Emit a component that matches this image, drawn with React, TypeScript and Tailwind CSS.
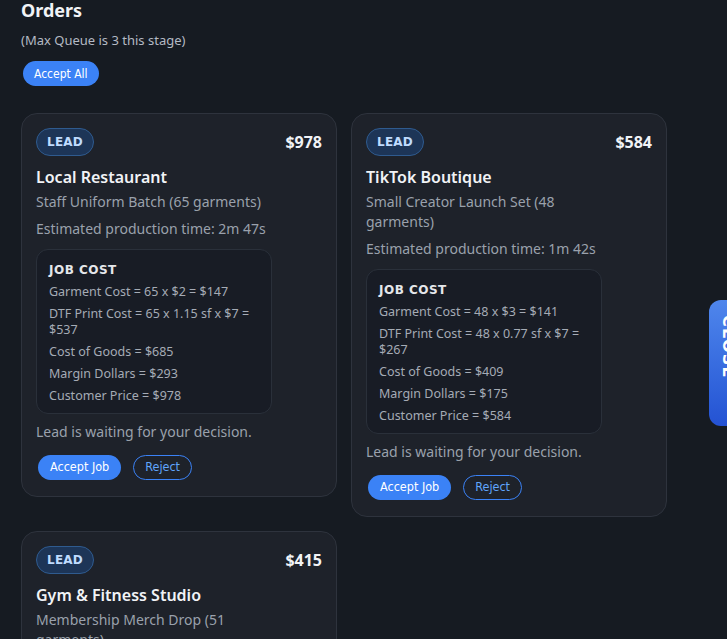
import React from 'react';

type Order = {
  id: number;
  customer: string;
  job: string;
  price: number;
  eta: string;
  costs: string[];
};

const ORDERS: Order[] = [
  {
    id: 1,
    customer: 'Local Restaurant',
    job: 'Staff Uniform Batch (65 garments)',
    price: 978,
    eta: '2m 47s',
    costs: [
      'Garment Cost = 65 x $2 = $147',
      'DTF Print Cost = 65 x 1.15 sf x $7 = $537',
      'Cost of Goods = $685',
      'Margin Dollars = $293',
      'Customer Price = $978',
    ],
  },
  {
    id: 2,
    customer: 'TikTok Boutique',
    job: 'Small Creator Launch Set (48 garments)',
    price: 584,
    eta: '1m 42s',
    costs: [
      'Garment Cost = 48 x $3 = $141',
      'DTF Print Cost = 48 x 0.77 sf x $7 = $267',
      'Cost of Goods = $409',
      'Margin Dollars = $175',
      'Customer Price = $584',
    ],
  },
  {
    id: 3,
    customer: 'Gym & Fitness Studio',
    job: 'Membership Merch Drop (51 garments)',
    price: 415,
    eta: '1m 58s',
    costs: [
      'Garment Cost = 51 x $2 = $102',
      'DTF Print Cost = 51 x 0.62 sf x $7 = $221',
      'Cost of Goods = $323',
      'Margin Dollars = $92',
      'Customer Price = $415',
    ],
  },
];

const OrderCard = ({ order }: { order: Order }) => (
  <div className="rounded-2xl border border-[#2e333d] bg-[#1e222a] px-[14px] pt-[14px] pb-[16px]">
    <div className="flex items-start justify-between">
      <span className="inline-flex h-[28px] items-center rounded-full border border-[#2f5b8f] bg-[#1d3557] px-[10px] font-['DejaVu_Sans',sans-serif] text-[12px] font-bold tracking-[0.02em] text-[#bfdbfe]">
        LEAD
      </span>
      <span className="pt-[2px] text-[16px] font-bold text-[#f1f3f6]">${order.price}</span>
    </div>
    <h3 className="mt-[10px] text-[16px] leading-[22px] font-semibold text-[#f1f3f6]">{order.customer}</h3>
    <p className="mt-[4px] w-[250px] text-[14px] leading-[20px] text-[#9aa1ac]">{order.job}</p>
    <p className="mt-[7px] text-[14px] leading-[20px] text-[#9aa1ac]">Estimated production time: {order.eta}</p>
    <div className="mt-[10px] w-[236px] rounded-xl border border-[#2a303a] bg-[#181c25] px-[12px] pt-[11px] pb-[9px]">
      <div className="font-['DejaVu_Sans',sans-serif] text-[12px] font-bold tracking-[0.04em] text-[#e5e7eb]">JOB COST</div>
      <div className="mt-[5px] flex flex-col gap-[6px]">
        {order.costs.map((line) => (
          <div key={line} className="text-[12.5px] leading-[16px] text-[#a5abb5]">
            {line}
          </div>
        ))}
      </div>
    </div>
    <p className="mt-[8px] text-[14px] leading-[20px] text-[#9aa1ac]">Lead is waiting for your decision.</p>
    <div className="mt-[13px] flex items-center gap-[12px] pl-[2px]">
      <button className="h-[25px] rounded-full bg-[#3b82f6] px-[12px] font-['DejaVu_Sans_Condensed','DejaVu_Sans',sans-serif] text-[12.5px] text-white">
        Accept Job
      </button>
      <button className="h-[25px] rounded-full border border-[#3b82f6] px-[11px] font-['DejaVu_Sans_Condensed','DejaVu_Sans',sans-serif] text-[12.5px] text-[#60a5fa]">
        Reject
      </button>
    </div>
  </div>
);

export default function App() {
  return (
    <div className="relative h-[639px] overflow-hidden bg-[#161b22] font-['Noto_Sans',sans-serif]">
      <div className="px-[21px] pt-0">
        <h2 className="-mt-[3px] text-[18px] leading-[27px] font-bold text-[#f1f3f6]">Orders</h2>
        <p className="mt-[7px] text-[13px] leading-[18px] text-[#b4bac4]">(Max Queue is 3 this stage)</p>
        <button className="mt-[12px] ml-[2px] h-[25px] rounded-full bg-[#3b82f6] px-[11px] font-['DejaVu_Sans_Condensed','DejaVu_Sans',sans-serif] text-[12px] text-white">
          Accept All
        </button>
        <div className="mt-[27px] grid grid-cols-[316px_316px] items-start gap-[14px]">
          {ORDERS.map((o) => (
            <OrderCard key={o.id} order={o} />
          ))}
        </div>
      </div>

      {/* side drawer toggle */}
      <button className="absolute top-[300px] left-[709px] flex h-[126px] w-[40px] items-start justify-start rounded-l-xl bg-gradient-to-b from-[#4f86ec] to-[#2452d3] pt-[15px] pl-[7px]">
        <span className="[writing-mode:vertical-rl] font-['DejaVu_Sans',sans-serif] text-[16px] font-semibold tracking-[0.08em] text-white">
          CLOSE ^
        </span>
      </button>
    </div>
  );
}
